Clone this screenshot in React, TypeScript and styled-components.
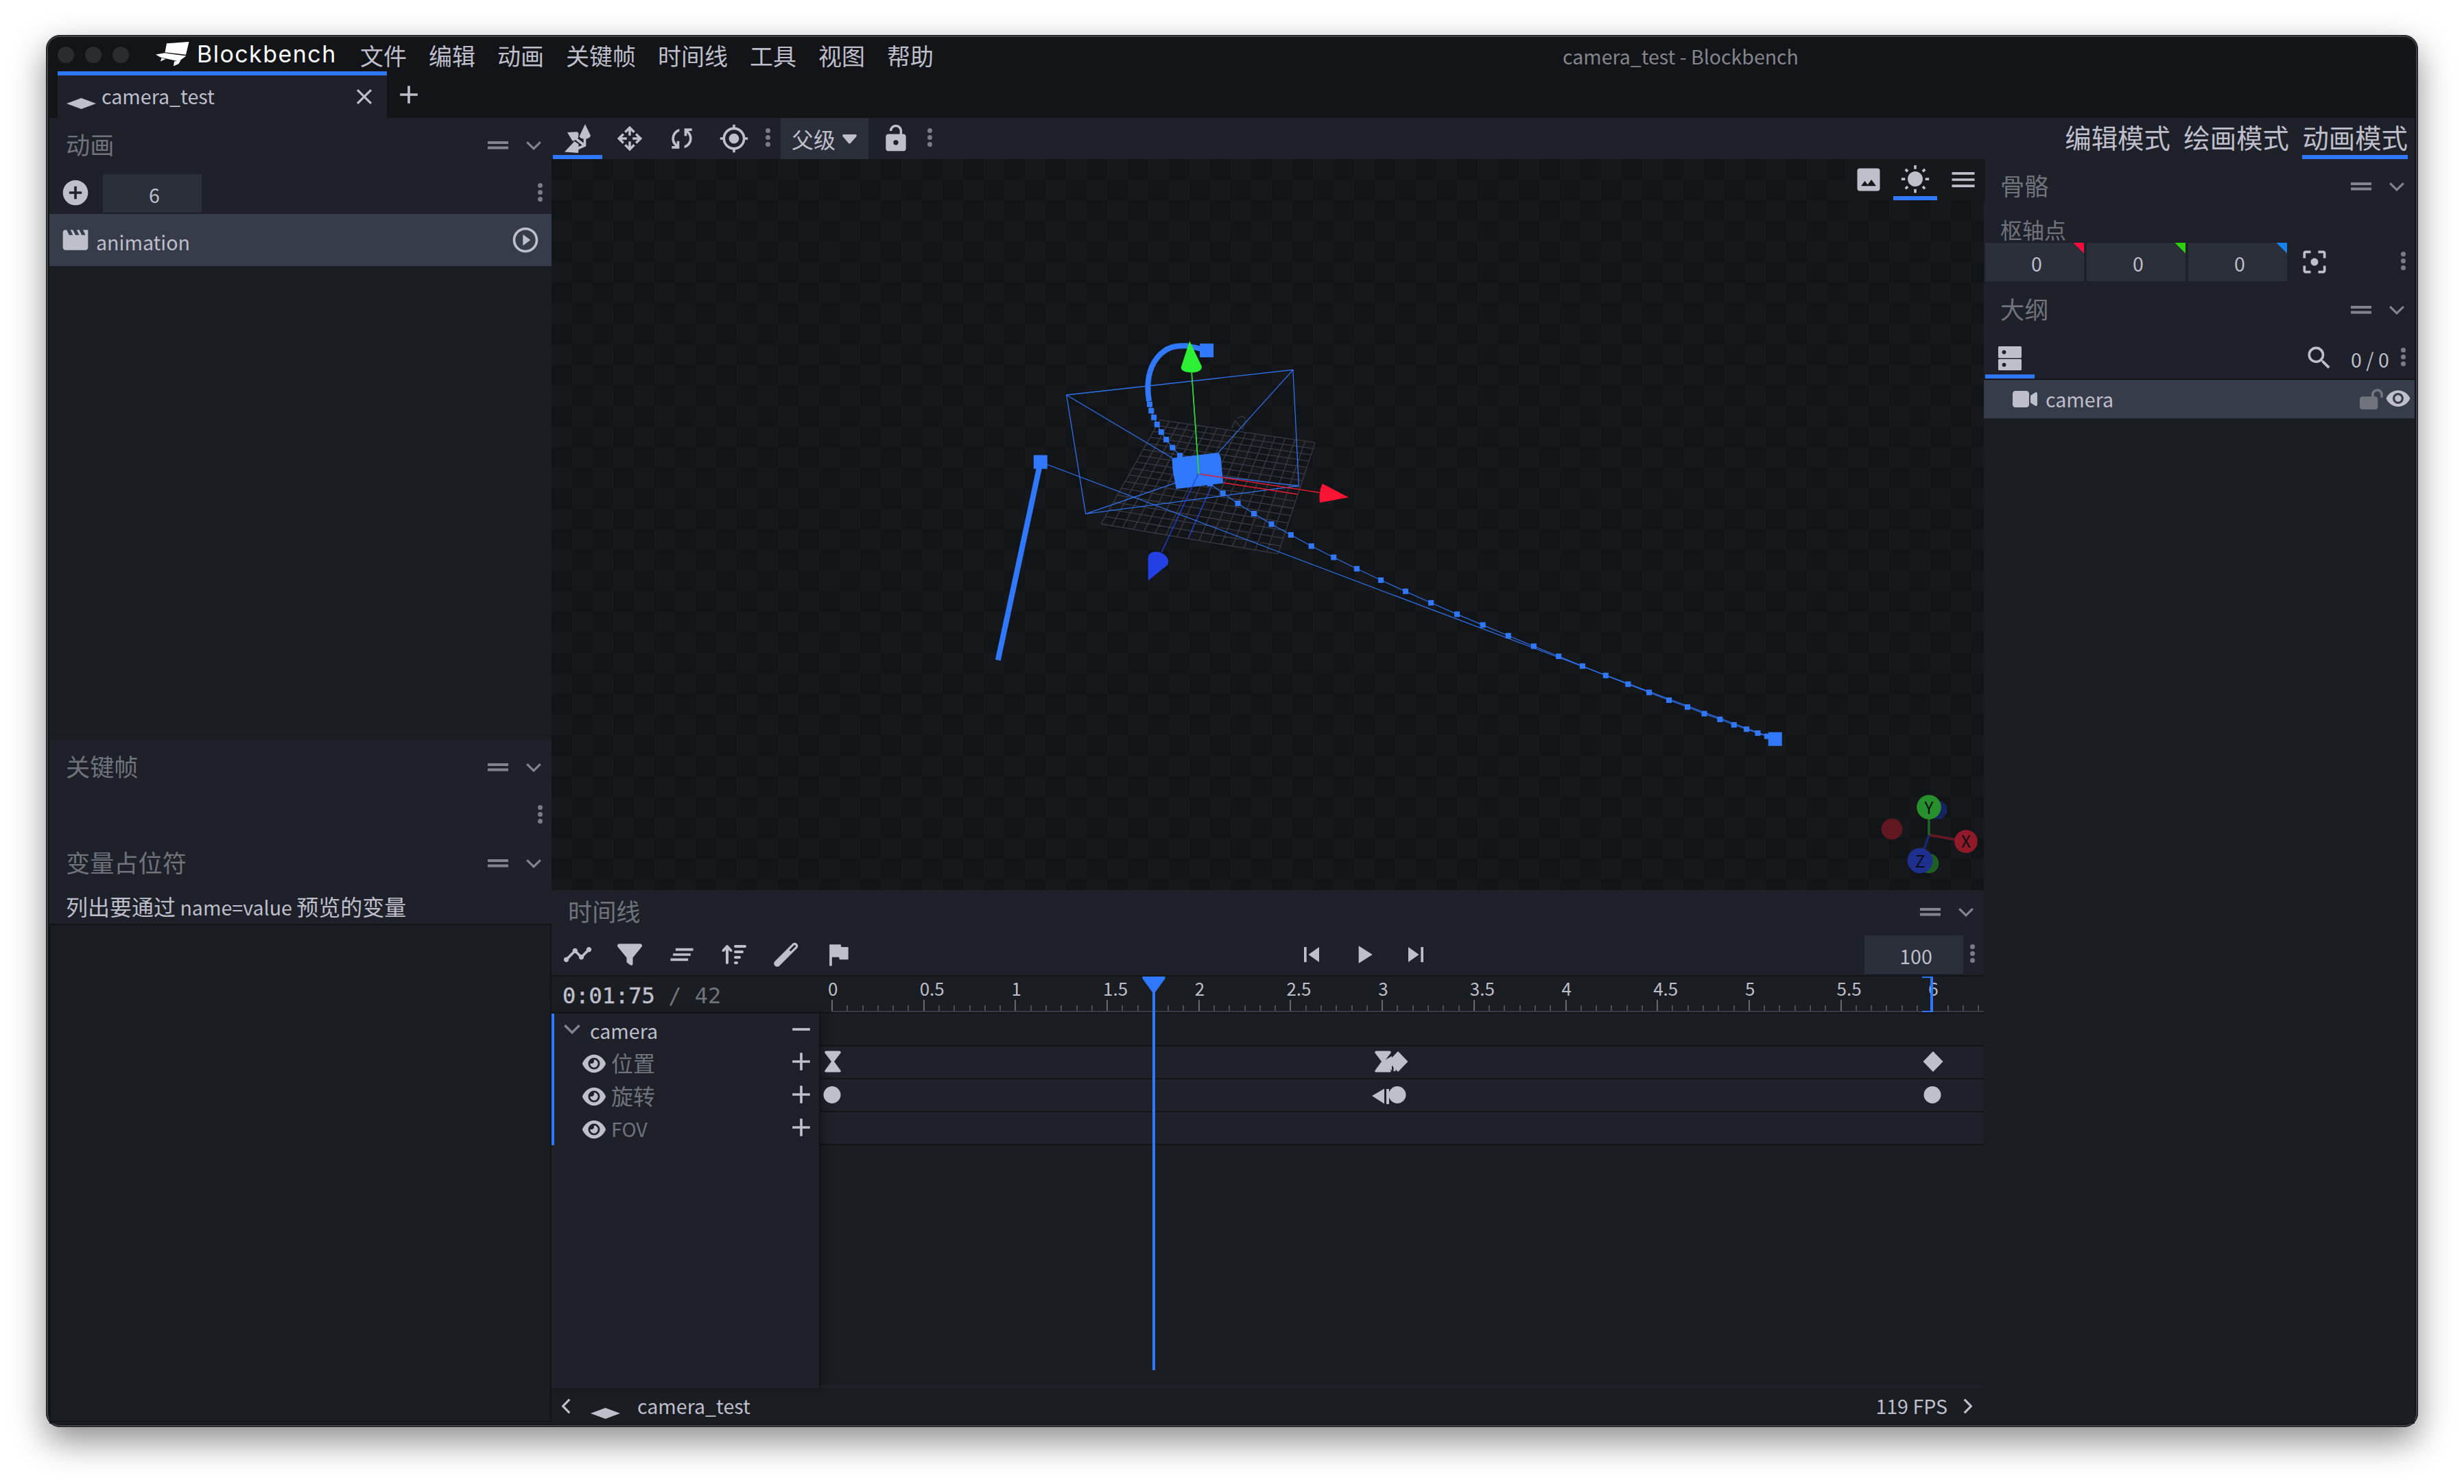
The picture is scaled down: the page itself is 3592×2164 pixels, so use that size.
import React from "react";
import styled, { createGlobalStyle, css } from "styled-components";
import {
  MdAdd, MdAddCircle, MdClearAll, MdClose, MdFilterCenterFocus, MdFlag, MdGpsFixed, MdMenu, MdMovie,
  MdPlayArrow, MdPlayCircleOutline, MdRemove, MdSearch, MdSkipNext, MdSkipPrevious, MdTimeline,
  MdVisibility, MdWbSunny,
} from "react-icons/md";
import { FaArrowUpWideShort, FaEye, FaFilter, FaLockOpen, FaVideo } from "react-icons/fa6";

const c = {
  frame: "#121418",
  ui: "#1e2129",
  back: "#1a1d21",
  button: "#2b2f3a",
  selected: "#373c4a",
  border: "#121417",
  text: "#bfbecb",
  subtle: "#70737c",
  accent: "#3079ff",
};

const Global = createGlobalStyle`
  body { margin: 0; background: #fff; }
  * { box-sizing: border-box; }
  svg { display: block; flex: none; }
`;

const Page = styled.div`
  width: 3592px;
  height: 2164px;
  padding: 51px 67px;
  overflow: hidden;
  background: #fff;
  color: ${c.text};
  font-family: "Noto Sans CJK SC", "Noto Sans", sans-serif;
  font-size: 32px;
  white-space: nowrap;
`;

const Window = styled.div`
  width: 3458px;
  height: 2030px;
  padding: 2px 4px 4px;
  border: 1px solid #141619;
  border-radius: 20px;
  background: ${c.frame};
  box-shadow: inset 0 0 0 2px #3f4145, 0 20px 50px rgba(0, 0, 0, 0.46);
  display: flex;
  flex-direction: column;
`;

const Latin = styled.span<{ $size?: number }>`
  font-size: ${(p) => p.$size ?? 28.6}px;
`;

/* ---------- title bar ---------- */

const TitleBar = styled.header`
  height: 50px;
  display: flex;
  align-items: center;
`;

const Lights = styled.div`
  display: flex;
  gap: 16px;
  padding-left: 12px;
  width: 155px;
  margin-top: 2px;
`;

const Light = styled.i`
  width: 24px;
  height: 24px;
  border-radius: 50%;
  background: #2b2c30;
`;

const Brand = styled.div`
  width: 298px;
  display: flex;
  align-items: center;
  gap: 11px;
  color: #fff;
  font-family: Inter, sans-serif;
  font-size: 34px;
  letter-spacing: 1.45px;
  line-height: 50px;
`;

const Menu = styled.nav`
  display: flex;
  gap: 32px;
  font-size: 34px;
  line-height: 52px;
  margin-top: 3px;
`;

const WindowTitle = styled.div`
  margin-left: 917px;
  margin-top: 6px;
  color: #84858d;
  font-size: 28.5px;
  line-height: 48px;
`;

const Tabs = styled.div`
  height: 68px;
  display: flex;
  padding-left: 12px;
`;

const Tab = styled.div`
  width: 480px;
  height: 68px;
  border-top: 6px solid ${c.accent};
  background: ${c.ui};
  display: flex;
  align-items: center;
  padding: 0 14px 0 13px;
  font-size: 28.6px;
  line-height: 60px;
`;

const TabName = styled.span`
  flex: 1;
  padding: 0 0 2px 8px;
`;

const NewTab = styled.div`
  padding: 12px 0 0 10px;
`;

/* ---------- panels ---------- */

const Body = styled.div`
  flex: 1;
  display: flex;
  min-height: 0;
`;

const Sidebar = styled.aside<{ $w: number }>`
  width: ${(p) => p.$w}px;
  display: flex;
  flex-direction: column;
  background: ${c.ui};
`;

const Head = styled.div<{ $h?: number; $pad?: number }>`
  height: ${(p) => p.$h ?? 80}px;
  padding-left: ${(p) => p.$pad ?? 24}px;
  display: flex;
  align-items: center;
  color: ${c.subtle};
  font-size: 35.2px;
  line-height: 1;
`;

const HeadTitle = styled.span`
  flex: 1;
  margin-top: -4px;
`;

const HeadIcon = styled.span`
  width: 52px;
  display: flex;
  justify-content: center;
  color: #81848c;
`;

const Toolbar = styled.div`
  height: 60px;
  display: flex;
  align-items: center;
`;

const Tool = styled.div<{ $active?: boolean; $w?: number }>`
  width: ${(p) => p.$w ?? 76}px;
  height: 60px;
  flex: none;
  display: flex;
  align-items: center;
  justify-content: center;
  ${(p) => p.$active && css`
    background: linear-gradient(${c.accent}, ${c.accent}) 50% 100% / calc(100% - 4px) 6px no-repeat;
  `}
`;

const Spacer = styled.div`
  flex: 1;
`;

const NumberBox = styled.div<{ $corner?: string }>`
  width: 144px;
  height: 56px;
  margin: 0 2px;
  padding: 3px 0 0 6px;
  background: ${(p) => p.$corner
    ? `linear-gradient(to top right, transparent 50%, ${p.$corner} 51%) 100% 0 / 16px 16px no-repeat, ${c.button}`
    : c.button};
  text-align: center;
  font-size: 28.6px;
  line-height: 54px;
`;

const DotsBox = styled.div`
  width: 24px;
  margin: 0 5px 4px -1px;
  display: flex;
  flex-direction: column;
  align-items: center;
  gap: 3px;
`;

const Dot = styled.i`
  width: 7px;
  height: 7px;
  border-radius: 50%;
  background: #797c85;
`;

const AnimationList = styled.div`
  height: 767px;
  background: ${c.back};
`;

const AnimationItem = styled.div`
  height: 76px;
  background: ${c.selected};
  display: flex;
  align-items: center;
  padding: 0 16px;
  font-size: 28.6px;
  line-height: 72px;
`;

const AnimationName = styled.span`
  flex: 1;
  padding: 5px 0 0 8px;
`;

const Hint = styled.div`
  height: 48px;
  padding-left: 24px;
  line-height: 45px;
`;

const CodeArea = styled.div`
  flex: 1;
  margin-bottom: 2px;
  border: 2px solid ${c.border};
  background: ${c.back};
`;

/* ---------- workspace ---------- */

const Workspace = styled.main`
  flex: 1;
  display: flex;
  flex-direction: column;
  min-width: 0;
`;

const MainToolbar = styled(Toolbar)`
  background: ${c.ui};
`;

const Select = styled.div`
  width: 128px;
  height: 60px;
  margin: 0 2px;
  padding-left: 16px;
  display: flex;
  align-items: center;
  gap: 10px;
  background: ${c.button};
  line-height: 60px;
`;

const Modes = styled.div`
  display: flex;
  gap: 19.5px;
  padding-right: 10px;
  font-size: 38.4px;
`;

const Mode = styled.div<{ $active?: boolean }>`
  height: 60px;
  line-height: 54px;
  border-bottom: 6px solid ${(p) => (p.$active ? c.accent : "transparent")};
`;

const Center = styled.section`
  width: 2088px;
  display: flex;
  flex-direction: column;
`;

const Viewport = styled.div`
  position: relative;
  height: 1066px;
  background: repeating-conic-gradient(#17181b 0 25%, #111518 0 50%) 0 0 / 60px 60px;
`;

const ViewportMenu = styled.div`
  position: absolute;
  top: 0;
  right: -2px;
  width: 204px;
  display: flex;
  background: #17181b;
`;

const StatusBar = styled.footer`
  height: 52px;
  display: flex;
  align-items: center;
  padding: 0 12px 0 10px;
  background: ${c.back};
  font-size: 28.6px;
  line-height: 50px;
`;

const StatusName = styled.span`
  flex: 1;
  padding-left: 25px;
`;

const StatusIcon = styled.span`
  margin: 22px 0 0 25px;
`;

const FrameRate = styled.span`
  margin-right: 19px;
`;

/* ---------- timeline ---------- */

const TimelinePanel = styled.section`
  height: 726px;
  background: ${c.ui};
`;

const TimelineHeader = styled.div`
  height: 56px;
  border-top: 2px solid ${c.border};
  border-bottom: 2px solid ${c.border};
  display: flex;
  background: ${c.back};
`;

const Timecode = styled.div`
  width: 408px;
  padding-left: 16px;
  font-family: "DejaVu Sans Mono", monospace;
  font-size: 32px;
  line-height: 56px;
  height: 52px;
  -webkit-text-stroke: 0.5px ${c.text};
`;

const Dim = styled.span`
  color: ${c.subtle};
  -webkit-text-stroke: 0;
`;

const Ruler = styled.div`
  flex: 1;
  min-width: 0;
  display: flex;
  border-bottom: 2px solid #363b47;
`;

const Beat = styled.div<{ $last?: boolean }>`
  flex: none;
  width: ${(p) => (p.$last ? 72 : 133.7)}px;
  display: flex;
  flex-direction: column;
  justify-content: space-between;
  font-size: 26px;
  line-height: 34px;
`;

const BeatLabel = styled.span`
  margin-left: -5px;
  height: 34px;
`;

const Ticks = styled.div`
  display: flex;
  align-items: flex-end;
  height: 16px;
`;

const Tick = styled.i<{ $major?: boolean }>`
  flex: none;
  width: 22.283px;
  height: ${(p) => (p.$major ? 16 : 8)}px;
  border-left: 2px solid ${(p) => (p.$major ? "#666971" : "#4b4e56")};
`;

const TimelineBody = styled.div`
  position: relative;
  height: 546px;
  display: flex;
`;

const Animators = styled.div`
  width: 392px;
  height: 546px;
  border-right: 2px solid ${c.border};
  box-shadow: 4px 0 10px rgba(0, 0, 0, 0.25);
  z-index: 1;
`;

const AnimatorGroup = styled.div`
  height: 192px;
  border-left: 4px solid ${c.accent};
`;

const AnimatorRow = styled.div<{ $first?: boolean }>`
  height: ${(p) => (p.$first ? 46 : 48)}px;
  padding: 0 4px 0 ${(p) => (p.$first ? 14 : 41)}px;
  display: flex;
  align-items: center;
  color: ${(p) => (p.$first ? c.text : c.subtle)};
`;

const ChannelName = styled.span<{ $gap: number }>`
  flex: 1;
  padding: 2px 0 0 ${(p) => p.$gap}px;
  line-height: 44px;
`;

const Bright = styled.span<{ $dy?: number }>`
  color: ${c.text};
  margin-top: ${(p) => p.$dy ?? 0}px;
`;

const FoldArrow = styled.span`
  color: #81848c;
`;

const Tracks = styled.div`
  flex: 1;
  height: 542px;
  background: ${c.back};
`;

const Track = styled.div<{ $empty?: boolean }>`
  height: 48px;
  background: ${(p) => (p.$empty ? c.back : c.ui)};
  border-bottom: 2px solid ${c.border};
`;

const Overlay = styled.svg`
  position: absolute;
  left: 0;
  top: -54px;
  z-index: 2;
`;

/* ---------- outliner ---------- */

const Label = styled.div`
  height: 40px;
  padding-left: 24px;
  color: ${c.subtle};
  line-height: 44px;
`;

const Count = styled.span`
  width: 65px;
  margin-left: 8px;
`;

const Outliner = styled.div`
  flex: 1;
  border-top: 2px solid ${c.border};
  background: ${c.back};
`;

const OutlinerItem = styled.div`
  height: 56px;
  display: flex;
  align-items: center;
  padding: 0 5px 0 42px;
  background: ${c.selected};
  font-size: 28.6px;
  line-height: 54px;
`;

const NodeName = styled.span`
  flex: 1;
  padding-left: 12px;
`;

const LockToggle = styled.span`
  margin-right: 3px;
  color: ${c.subtle};
`;

const EyeToggle = styled.span`
  margin-bottom: 3px;
`;

/* ---------- icons ---------- */

const Dots = () => (
  <DotsBox><Dot /><Dot /><Dot /></DotsBox>
);

const Handle = () => (
  <svg width="30" height="12" viewBox="0 0 30 12" fill="currentColor"><path d="M0 0h30v4H0zM0 7.500h30v4H0z" /></svg>
);

const Chevron = ({ w = 22, h = 13, r = 0 }: { w?: number; h?: number; r?: number }) => (
  <svg width={w} height={h} viewBox="0 0 22 13" style={{ transform: `rotate(${r}deg)` }} fill="none" stroke="currentColor" strokeWidth="3.200">
    <path d="M1.200 1.200 11 10.800 20.800 1.200" />
  </svg>
);

const Diamond = () => (
  <svg width="43" height="16" viewBox="0 0 43 16" fill="currentColor"><path d="M0 8 21.500 0 43 8 21.500 16z" /></svg>
);

const Logo = () => (
  <svg width="49" height="36" viewBox="0 0 49 36" fill="#fff">
    <path d="M16 2.300 48.500 0 44 18.700 13.500 15.300zM0 18.500 13 16.300 44.500 20.500 33.500 28.500 7 22.500zM8.500 23.500 14.500 25 7 28.500zM27 28.500 36.500 27 33.500 32 26 35.500z" />
  </svg>
);

const GizmoIcon = () => (
  <svg width="38" height="42" viewBox="0 0 38 42" fill="currentColor">
    <path d="M30 0 37.800 16.500Q38 20 30 22 21.500 20.500 21.700 17.500z" />
    <path d="M4 12 18.500 11.300 20.500 13.500 20 20 13.500 24.500 11.500 24.500z" />
    <path d="M14.500 25 20.500 29 20.500 36 20 42 0 40.500z" />
    <path d="M29.500 20V31L16 37M29 31 15 20" fill="none" stroke="currentColor" strokeWidth="3.600" />
  </svg>
);

const MoveIcon = () => (
  <svg width="44" height="44" viewBox="0 0 24 24" fill="none" stroke="currentColor" strokeWidth="1.900">
    {[0, 90, 180, 270].map((a) => (
      <g key={a} transform={`rotate(${a} 12 12)`}>
        <path d="M12 9.700V4.500M8.400 7 12 3.400 15.600 7" />
        <path d="M12 2.300 14.200 5H9.800z" fill="currentColor" stroke="none" />
      </g>
    ))}
  </svg>
);

const SyncIcon = () => (
  <svg width="44" height="44" viewBox="0 -960 960 960" fill="currentColor">
    <path d="M160-160v-80h110l-16-14q-52-46-73-105t-21-119q0-111 66.500-197.500T400-790v84q-72 26-116 88.500T240-478q0 45 17 87.500t53 78.500l10 10v-98h80v240H160Zm400-10v-84q72-26 116-88.500T720-482q0-45-17-87.500T650-648l-10-10v98h-80v-240h240v80H690l16 14q49 49 71.500 106.500T800-482q0 111-66.500 197.500T560-170Z" />
  </svg>
);

const UnlockIcon = () => (
  <svg width="44" height="44" viewBox="0 0 24 24" fill="currentColor" fillRule="evenodd">
    <path d="M18 8.500h-1V6c0-2.760-2.240-5-5-5S7 3.240 7 6h1.900c0-1.710 1.390-3.100 3.100-3.100s3.100 1.390 3.100 3.100v2.500H6c-1.100 0-2 .9-2 2V20c0 1.100.9 2 2 2h12c1.100 0 2-.9 2-2v-9.500c0-1.100-.9-2-2-2zM12 17.200a2 2 0 1 1 0-4 2 2 0 0 1 0 4z" />
  </svg>
);

const ImageIcon = () => (
  <svg width="44" height="44" viewBox="0 0 24 24" fill="currentColor" fillRule="evenodd">
    <path d="M5 3h14a2 2 0 0 1 2 2v14a2 2 0 0 1-2 2H5a2 2 0 0 1-2-2V5a2 2 0 0 1 2-2zM6 17h12l-3.750-5-3 4L9 13z" />
  </svg>
);

const StorageIcon = () => (
  <svg width="34" height="35" viewBox="0 0 34 35" fill="currentColor" fillRule="evenodd">
    <path d="M1.500 0h31Q34 0 34 1.500V15.500Q34 17 32.500 17H1.500Q0 17 0 15.500V1.500Q0 0 1.500 0zM8.500 5.600a3 3 0 1 0 .01 0z" />
    <path d="M1.500 18.500h31Q34 18.500 34 20V33.500Q34 35 32.500 35H1.500Q0 35 0 33.500V20Q0 18.500 1.500 18.500zM8.500 24a3 3 0 1 0 .01 0z" />
  </svg>
);

const CaretIcon = () => (
  <svg width="21" height="16" viewBox="0 -2 21 16" fill="currentColor">
    <path d="M1.500 0h18q2.500 1 .5 3.500L12 12.800q-1.500 1.500-3 0L1 3.500Q-1 1 1.500 0z" />
  </svg>
);

const TubeIcon = () => (
  <svg width="36" height="36" viewBox="0 0 36 36" fill="none" strokeLinecap="round">
    <path d="M5 31 30.500 5.500" stroke="currentColor" strokeWidth="9.500" />
    <path d="M24.500 11.500 30.500 5.500" stroke={c.ui} strokeWidth="3" />
  </svg>
);

/* ---------- 3D scene ---------- */

// Corners of the ground grid, clockwise from the far left, in scene units.
const corners = [[708, 457], [1299, 556], [1158, 1043], [484, 912]];

const project = (u: number, v: number) => {
  const [[x0, y0], [x1, y1], [x2, y2], [x3, y3]] = corners;
  const dx1 = x1 - x2, dx2 = x3 - x2, sx = x0 - x1 + x2 - x3;
  const dy1 = y1 - y2, dy2 = y3 - y2, sy = y0 - y1 + y2 - y3;
  const det = dx1 * dy2 - dx2 * dy1;
  const g = (sx * dy2 - dx2 * sy) / det;
  const h = (dx1 * sy - sx * dy1) / det;
  const w = g * u + h * v + 1;
  return [
    ((x1 - x0 + g * x1) * u + (x3 - x0 + h * x3) * v + x0) / w,
    ((y1 - y0 + g * y1) * u + (y3 - y0 + h * y3) * v + y0) / w,
  ];
};

const seg = (a: number[], b: number[]) => `M${a[0]} ${a[1]}L${b[0]} ${b[1]}`;

const gridPath = Array.from({ length: 17 }, (_, i) => i / 16)
  .map((t) => seg(project(t, 0), project(t, 1)) + seg(project(0, t), project(1, t)))
  .join("");

const nearX = (x: number) => 1420 + x / 2.6133;
const nearY = (y: number) => 460 + y / 3;
const farX = (x: number) => 2000 + x / 2.45;
const farY = (y: number) => 800 + y / 3;

const nearDots = [
  [669, 389], [675, 417], [685, 446], [697, 477], [713, 510], [732, 543], [756, 578], [784, 613], [899, 736],
  [948, 778], [1005, 822], [1066, 867], [1133, 913], [1207, 960], [1285, 1009], [1370, 1058], [1458, 1108],
].map(([x, y]) => [nearX(x), nearY(y)]);

const farDots = [
  [32, 138], [120, 187], [211, 237], [304, 287], [396, 334], [487, 381], [578, 427], [667, 471], [752, 514],
  [835, 555], [915, 593], [990, 629], [1061, 663], [1127, 693], [1187, 722], [1243, 747], [1293, 771],
  [1338, 790], [1378, 807], [1411, 821], [1440, 833],
].map(([x, y]) => [farX(x), farY(y)]);

const pathDots = [...nearDots, ...farDots];

const keyPoints = [[nearX(253), nearY(641)], [nearX(886), nearY(153)], [farX(1440), farY(833)]];

const Scene = () => (
  <svg width="2088" height="1066" viewBox="804 232 2088 1066" fill="none">
    <g transform="translate(1420 460) scale(0.38266 0.33333)" strokeWidth="1.300">
      <g stroke="#373a48">
        <path d={gridPath} vectorEffect="non-scaling-stroke" />
        <path d="M981 494 995 460 1023 499 1036 458M1003 449 1022 441 1036 452" vectorEffect="non-scaling-stroke" />
      </g>
      <path d="M902 752 817 973" stroke="#2340c8" vectorEffect="non-scaling-stroke" />
      <path d="M352 348 1215 238 1237 745 425 868ZM352 348 756 624M1215 238 929 602M1237 745 949 707M425 868 766 733" stroke="#2f72ee" vectorEffect="non-scaling-stroke" />
      <path d="M667 376C655 300 665 230 699 183S772 130 810 133Q850 140 886 153M253 641 91 1508" stroke={c.accent} strokeWidth="8" vectorEffect="non-scaling-stroke" />
      <path d="M754 624 932 600 940 622 949 734 770 759 757 680z" fill={c.accent} />
      <path d="M950 732 1232 782M856 693 1316 775" stroke="#e01a30" strokeWidth="1.500" vectorEffect="non-scaling-stroke" />
      <path d="M854 693 714 1036" stroke="#2340e0" vectorEffect="non-scaling-stroke" />
      <path d="M829 250 856 693" stroke="#2fd336" strokeWidth="1.500" vectorEffect="non-scaling-stroke" />
    </g>
    <path d={"M" + pathDots.map((p) => p.join(" ")).join("L")} stroke={c.accent} strokeWidth="1.200" opacity="0.9" />
    <path d={seg(keyPoints[0], keyPoints[2])} stroke={c.accent} strokeWidth="1.200" opacity="0.9" />
    <g fill={c.accent}>
      {pathDots.map(([x, y]) => <rect key={x} x={x - 4} y={y - 4} width="8" height="8" />)}
      {keyPoints.map(([x, y]) => <rect key={x} x={x - 10} y={y - 10} width="20" height="20" />)}
    </g>
    <g transform="translate(1420 460) scale(0.38266 0.33333)">
      <path d="M856 693 829 250" stroke="#2fd336" strokeWidth="1.500" vectorEffect="non-scaling-stroke" />
      <path d="M821 112 867 222C870 240 850 250 828 250S786 242 789 225z" fill="#2bf033" />
      <path d="M1327 736 1427 796 1317 819Q1312 775 1327 736z" fill="#fb1433" />
      <path d="M663 1160V1058C664 1026 720 1022 738 1065Q744 1085 733 1096z" fill="#2240e3" />
    </g>
    <g transform="translate(2640 1120) scale(0.33333)" strokeWidth="11">
      <circle cx="354" cy="267" r="46" fill="#611820" />
      <circle cx="556" cy="183" r="40" fill="#18235f" />
      <circle cx="516" cy="417" r="43" fill="#1e5f23" />
      <path d="M516 293 678 321" stroke="#641922" />
      <path d="M516 293V171" stroke="#1e6423" />
      <path d="M516 293 477 405" stroke="#182868" />
      <circle cx="516" cy="171" r="53.500" fill="#26902c" />
      <circle cx="678" cy="321" r="50.500" fill="#911a2a" />
      <circle cx="477" cy="405" r="55.500" fill="#1d3090" />
      <g fill="#0b0d10" fontSize="73" textAnchor="middle">
        <text x="516" y="201">Y</text>
        <text x="678" y="348">X</text>
        <text x="477" y="435">Z</text>
      </g>
    </g>
  </svg>
);

/* ---------- keyframes ---------- */

const beats = Array.from({ length: 13 }, (_, i) => i / 2);
const diamondKey = (x: number, y: number) => <path d={`M${x} ${y - 15}l14.500 15-14.500 15-14.500-15z`} />;
const hourglassKey = (x: number, y: number) => (
  <path d={`M${x - 10} ${y - 15.500}h20q2.500 1 1.500 3L${x + 2} ${y}l9.500 13q1 2-1.500 2.500h-20q-2.500-.5-1.500-2.500L${x - 2} ${y}l-9.500-12.500q-1-2 1.500-3z`} />
);

// Drawn in page coordinates so that ruler, playhead and keys share one time axis.
const TimelineOverlay = () => (
  <Overlay width="2088" height="600" viewBox="804 1424 2088 600" fill={c.text}>
    {hourglassKey(1214, 1548)}
    {hourglassKey(2016, 1548)}
    <path d="M2012 1550 2029 1540V1561zM2031.500 1540h3v22h-3z" />
    {diamondKey(2038, 1548)}
    {diamondKey(2818, 1548)}
    <circle cx="1213" cy="1596.500" r="12.500" />
    <path d="M2000 1598 2018 1587.500V1609.500zM2021 1588h4v22h-4z" />
    <circle cx="2037" cy="1596.500" r="12.500" />
    <circle cx="2817" cy="1596.500" r="12.500" />
    <g fill={c.accent}>
      <path d="M1665.500 1424h33v3L1684 1447V1998h-4V1447l-14.500-20z" />
      <path d="M2802 1424h16v52h-16v-2h12v-48h-12z" />
    </g>
  </Overlay>
);

const PanelHead = ({ title, h, pad }: { title: string; h?: number; pad?: number }) => (
  <Head $h={h} $pad={pad}>
    <HeadTitle>{title}</HeadTitle>
    <HeadIcon><Handle /></HeadIcon>
    <HeadIcon><Chevron /></HeadIcon>
  </Head>
);

const menus = ["文件", "编辑", "动画", "关键帧", "时间线", "工具", "视图", "帮助"];

export default function App() {
  return (
    <Page>
      <Global />
      <Window>
        <TitleBar>
          <Lights><Light /><Light /><Light /></Lights>
          <Brand><Logo />Blockbench</Brand>
          <Menu>{menus.map((m) => <span key={m}>{m}</span>)}</Menu>
          <WindowTitle>camera_test - Blockbench</WindowTitle>
        </TitleBar>
        <Tabs>
          <Tab>
            <Bright $dy={20}><Diamond /></Bright>
            <TabName>camera_test</TabName>
            <MdClose size={38} />
          </Tab>
          <NewTab><MdAdd size={44} /></NewTab>
        </Tabs>

        <Body>
          <Sidebar $w={732}>
            <PanelHead title="动画" />
            <Toolbar>
              <Tool><MdAddCircle size={44} style={{ marginBottom: 3 }} /></Tool>
              <NumberBox>6</NumberBox>
              <Spacer />
              <Dots />
            </Toolbar>
            <AnimationList>
              <AnimationItem>
                <MdMovie size={44} />
                <AnimationName>animation</AnimationName>
                <MdPlayCircleOutline size={44} />
              </AnimationItem>
            </AnimationList>
            <PanelHead title="关键帧" />
            <Toolbar><Spacer /><Dots /></Toolbar>
            <PanelHead title="变量占位符" />
            <Hint>列出要通过<Latin> name=value </Latin>预览的变量</Hint>
            <CodeArea />
          </Sidebar>

          <Workspace>
            <MainToolbar>
              <Tool $active><GizmoIcon /></Tool>
              <Tool><MoveIcon /></Tool>
              <Tool><SyncIcon /></Tool>
              <Tool><MdGpsFixed size={44} /></Tool>
              <Dots />
              <Select>
                父级
                <CaretIcon />
              </Select>
              <Tool><UnlockIcon /></Tool>
              <Dots />
              <Spacer />
              <Modes>
                <Mode>编辑模式</Mode>
                <Mode>绘画模式</Mode>
                <Mode $active>动画模式</Mode>
              </Modes>
            </MainToolbar>

            <Body>
              <Center>
                <Viewport>
                  <Scene />
                  <ViewportMenu>
                    <Tool $w={68}><ImageIcon /></Tool>
                    <Tool $w={68} $active><MdWbSunny size={44} /></Tool>
                    <Tool $w={68}><MdMenu size={44} style={{ marginLeft: 3 }} /></Tool>
                  </ViewportMenu>
                </Viewport>
                <TimelinePanel>
                  <PanelHead title="时间线" h={64} />
                  <Toolbar>
                    <Tool><MdTimeline size={44} /></Tool>
                    <Tool><FaFilter size={36} /></Tool>
                    <Tool><MdClearAll size={44} /></Tool>
                    <Tool><FaArrowUpWideShort size={36} /></Tool>
                    <Tool><TubeIcon /></Tool>
                    <Tool><MdFlag size={44} /></Tool>
                    <Spacer />
                    <Tool><MdSkipPrevious size={44} /></Tool>
                    <Tool><MdPlayArrow size={44} /></Tool>
                    <Tool><MdSkipNext size={44} /></Tool>
                    <Spacer />
                    <NumberBox>100</NumberBox>
                    <Dots />
                  </Toolbar>
                  <TimelineHeader>
                    <Timecode>0:01:75<Dim> / 42</Dim></Timecode>
                    <Ruler>
                      {beats.map((b) => (
                        <Beat key={b} $last={b === 6}>
                          <BeatLabel>{b}</BeatLabel>
                          <Ticks>
                            <Tick $major /><Tick /><Tick /><Tick />
                            {b < 6 && <><Tick /><Tick /></>}
                          </Ticks>
                        </Beat>
                      ))}
                    </Ruler>
                  </TimelineHeader>
                  <TimelineBody>
                    <Animators>
                      <AnimatorGroup>
                        <AnimatorRow $first>
                          <FoldArrow><Chevron w={24} h={14} /></FoldArrow>
                          <ChannelName $gap={14}><Latin>camera</Latin></ChannelName>
                          <MdRemove size={44} />
                        </AnimatorRow>
                        {["位置", "旋转", "FOV"].map((n) => (
                          <AnimatorRow key={n}>
                            <Bright $dy={6}><FaEye size={34} /></Bright>
                            <ChannelName $gap={8}>{n === "FOV" ? <Latin>{n}</Latin> : n}</ChannelName>
                            <Bright><MdAdd size={44} /></Bright>
                          </AnimatorRow>
                        ))}
                      </AnimatorGroup>
                    </Animators>
                    <Tracks>
                      <Track $empty />
                      <Track />
                      <Track />
                      <Track />
                    </Tracks>
                    <TimelineOverlay />
                  </TimelineBody>
                </TimelinePanel>
                <StatusBar>
                  <Chevron r={90} />
                  <StatusIcon><Diamond /></StatusIcon>
                  <StatusName>camera_test</StatusName>
                  <FrameRate>119 FPS</FrameRate>
                  <Chevron r={-90} />
                </StatusBar>
              </Center>

              <Sidebar $w={628}>
                <PanelHead title="骨骼" />
                <Label>枢轴点</Label>
                <Toolbar>
                  <NumberBox $corner="#fd0a3c">0</NumberBox>
                  <NumberBox $corner="#2bcf0b">0</NumberBox>
                  <NumberBox $corner="#1583f0">0</NumberBox>
                  <Tool><MdFilterCenterFocus size={44} /></Tool>
                  <Spacer />
                  <Dots />
                </Toolbar>
                <PanelHead title="大纲" />
                <Toolbar>
                  <Tool $active><StorageIcon /></Tool>
                  <Spacer />
                  <Tool><MdSearch size={44} /></Tool>
                  <Count><Latin>0 / 0</Latin></Count>
                  <Dots />
                </Toolbar>
                <Outliner>
                  <OutlinerItem>
                    <FaVideo size={36} />
                    <NodeName>camera</NodeName>
                    <LockToggle><FaLockOpen size={34} /></LockToggle>
                    <EyeToggle><MdVisibility size={38} /></EyeToggle>
                  </OutlinerItem>
                </Outliner>
              </Sidebar>
            </Body>
          </Workspace>
        </Body>
      </Window>
    </Page>
  );
}
